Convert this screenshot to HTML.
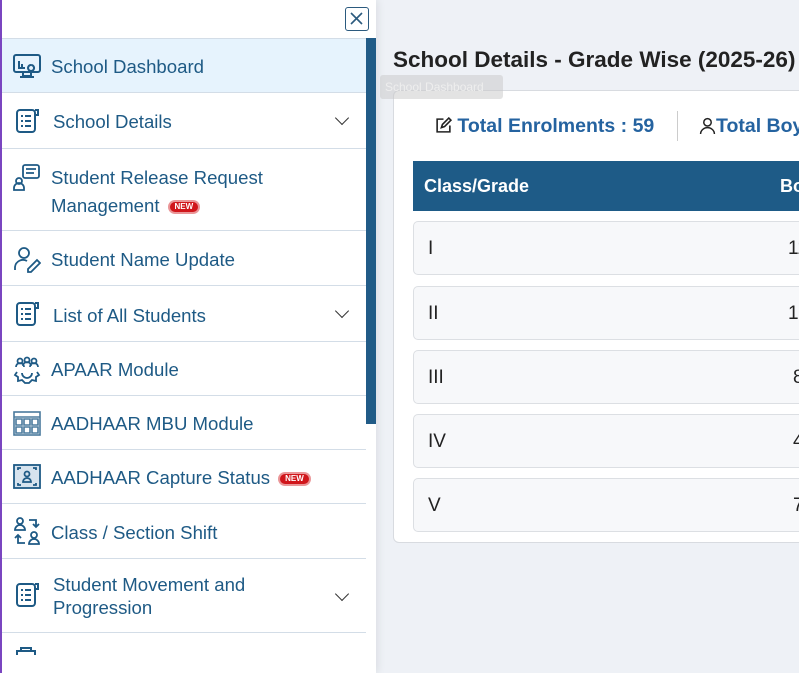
<!DOCTYPE html>
<html><head><meta charset="utf-8"><style>
*{margin:0;padding:0;box-sizing:border-box}
body{width:799px;height:673px;overflow:hidden;background:#eef1f6;font-family:"Liberation Sans",sans-serif;position:relative}
.side{position:absolute;left:0;top:0;width:376px;height:673px;background:#fff;border-left:2px solid #7a45c0;box-shadow:2px 0 8px rgba(0,0,0,.08)}
.close{position:absolute;left:343px;top:7px;width:24px;height:24px;border:1.5px solid #2b5a7e;border-radius:3px}
.thumb{position:absolute;left:364px;top:38px;width:10px;height:386px;background:#215b87}
.row{position:absolute;left:0;width:364px;border-top:1.5px solid #d3dde7;color:#1e5a85;font-size:18.6px}
.row svg{position:absolute;left:11px}
.row .t{position:absolute;left:49px;line-height:28px;white-space:nowrap}
.chev{position:absolute;left:335px;width:10px;height:10px;border-right:1.5px solid #333;border-bottom:1.5px solid #333;transform:rotate(45deg)}
.new{display:inline-block;background:#d0161b;color:#fff;font-size:8px;line-height:9px;height:10px;font-weight:bold;padding:0 5px;border-radius:5px;margin-left:10px;vertical-align:middle;box-shadow:0 0 0 2px rgba(208,22,27,.45)}
.title{position:absolute;left:393px;top:47px;font-size:22.5px;font-weight:bold;color:#222;white-space:nowrap}
.tip{position:absolute;left:380px;top:75px;width:123px;height:24px;background:rgba(200,200,200,.5);color:#eee;font-size:12px;padding:5px;border-radius:3px;z-index:3}
.card{position:absolute;left:393px;top:90px;width:420px;height:453px;background:#fff;border:1px solid #d8dbe0;border-radius:6px}
.stat{position:absolute;top:115px;font-size:19.5px;font-weight:bold;color:#2563a0;white-space:nowrap}
.head{position:absolute;left:413px;top:161px;width:400px;height:50px;background:#1e5b87;color:#fff;font-weight:bold;font-size:18px}
.tr{position:absolute;left:413px;width:400px;height:54px;background:#f7f8fa;border:1px solid #dcdfe3;border-radius:5px;font-size:19px;color:#222}
.tr span{position:absolute;top:16px}
</style></head><body>
<div class="side">
<div class="close"><svg width="21" height="21" viewBox="0 0 21 21"><path d="M5 5L16 16M16 5L5 16" stroke="#2b5a7e" stroke-width="1.6"/></svg></div>
<div class="row" style="top:38px;height:55px;background:#e6f3fd"><svg width="28" height="28" viewBox="0 0 28 28" style="top:13px" fill="none" stroke="#1e5a85" stroke-width="2"><rect x="1" y="3" width="26" height="17" rx="2"/><path d="M6 9v7h6M9 12v4M18 13a3 3 0 1 0 0.1 0M10 20v4h8v-4M7 25h14"/></svg><span class="t" style="top:14px">School Dashboard</span></div>
<div class="row" style="top:92px;height:57px"><svg width="28" height="28" viewBox="0 0 28 28" style="top:14px" fill="none" stroke="#1e5a85" stroke-width="2"><rect x="4" y="3" width="18" height="22" rx="3"/><path d="M22 3h3v5h-3M8 9h2M12 9h6M8 14h2M12 14h6M8 19h2M12 19h6"/></svg><span class="t" style="left:51px;top:15px">School Details</span><i class="chev" style="top:20px"></i></div>
<div class="row" style="top:148px;height:83px"><svg width="28" height="28" viewBox="0 0 28 28" style="top:14px" fill="none" stroke="#1e5a85" stroke-width="1.8"><rect x="10" y="2" width="16" height="13" rx="2"/><path d="M13 6h10M13 10h8"/><circle cx="6" cy="18" r="3"/><path d="M1 27v-2a5 5 0 0 1 10 0v2z"/></svg><span class="t" style="top:15px">Student Release Request<br>Management<span class="new">NEW</span></span></div>
<div class="row" style="top:230px;height:56px"><svg width="28" height="28" viewBox="0 0 28 28" style="top:14px" fill="none" stroke="#1e5a85" stroke-width="1.8"><circle cx="11" cy="8" r="5"/><path d="M2 25v-3a8 8 0 0 1 12-6M15 24l9-9 3 3-9 9h-3z"/></svg><span class="t" style="top:15px">Student Name Update</span></div>
<div class="row" style="top:285px;height:57px"><svg width="28" height="28" viewBox="0 0 28 28" style="top:14px" fill="none" stroke="#1e5a85" stroke-width="2"><rect x="4" y="3" width="18" height="22" rx="3"/><path d="M22 3h3v5h-3M8 9h2M12 9h6M8 14h2M12 14h6M8 19h2M12 19h6"/></svg><span class="t" style="left:51px;top:16px">List of All Students</span><i class="chev" style="top:20px"></i></div>
<div class="row" style="top:341px;height:55px"><svg width="28" height="28" viewBox="0 0 28 28" style="top:14px" fill="none" stroke="#1e5a85" stroke-width="1.8"><circle cx="7" cy="5" r="2.5"/><circle cx="14" cy="4" r="2.5"/><circle cx="21" cy="5" r="2.5"/><path d="M3 11a4 4 0 0 1 8 0M10 10a4 4 0 0 1 8 0M17 11a4 4 0 0 1 8 0M4 16l-2 3 3 2 0 4 4-1 3 3h4l3-3 4 1 0-4 3-2-2-3M9 17a5 5 0 0 0 10 0"/></svg><span class="t" style="top:14px">APAAR Module</span></div>
<div class="row" style="top:395px;height:55px"><svg width="28" height="28" viewBox="0 0 28 28" style="top:13px" fill="none" stroke="#1e5a85" stroke-width="1.6" opacity=".8"><rect x="1" y="3" width="26" height="23"/><path d="M1 8h26M3 10h6v6h-6zM11 10h6v6h-6zM19 10h6v6h-6zM3 18h6v6h-6zM11 18h6v6h-6zM19 18h6v6h-6z"/></svg><span class="t" style="top:14px">AADHAAR MBU Module</span></div>
<div class="row" style="top:449px;height:55px"><svg width="28" height="28" viewBox="0 0 28 28" style="top:12px" fill="none" stroke="#1e5a85" stroke-width="1.8"><rect x="1" y="3" width="26" height="23" fill="#d6e3ee"/><path d="M5 8v-2h3M23 8v-2h-3M5 21v2h3M23 21v2h-3"/><circle cx="14" cy="12" r="2.5"/><path d="M10 20a4 4 0 0 1 8 0z"/></svg><span class="t" style="top:14px">AADHAAR Capture Status<span class="new">NEW</span></span></div>
<div class="row" style="top:503px;height:56px"><svg width="28" height="28" viewBox="0 0 28 28" style="top:13px" fill="none" stroke="#1e5a85" stroke-width="1.8"><circle cx="7" cy="4" r="3"/><path d="M2 13a5 5 0 0 1 10 0zM16 3h7v6M20 7l3 3 3-3"/><circle cx="21" cy="18" r="3"/><path d="M16 27a5 5 0 0 1 10 0zM12 26h-7v-7M2 21l3-3 3 3"/></svg><span class="t" style="top:15px">Class / Section Shift</span></div>
<div class="row" style="top:558px;height:75px"><svg width="28" height="28" viewBox="0 0 28 28" style="top:22px" fill="none" stroke="#1e5a85" stroke-width="2"><rect x="4" y="3" width="18" height="22" rx="3"/><path d="M22 3h3v5h-3M8 9h2M12 9h6M8 14h2M12 14h6M8 19h2M12 19h6"/></svg><span class="t" style="left:51px;top:14px;line-height:23px">Student Movement and<br>Progression</span><i class="chev" style="top:30px"></i></div>
<div class="row" style="top:632px;height:41px"><svg width="28" height="10" viewBox="0 0 28 10" style="top:13px" fill="none" stroke="#1e5a85" stroke-width="2"><path d="M4 9v-4h18v4M8 5v-3h10v3"/></svg></div>
<div class="thumb"></div>
</div>
<div class="title">School Details - Grade Wise (2025-26)</div>
<div class="tip">School Dashboard</div>
<div class="card"></div>
<div class="stat" style="left:435px"><svg width="17" height="17" viewBox="0 0 16 16" fill="none" stroke="#222" stroke-width="1.5" style="vertical-align:-2px"><path d="M8 2H2v12h12V8M6 10l1-3 6-6 2 2-6 6z"/></svg> Total Enrolments : 59</div>
<div style="position:absolute;left:677px;top:111px;width:1px;height:30px;background:#ccc"></div>
<div class="stat" style="left:699px"><svg width="17" height="17" viewBox="0 0 16 16" fill="none" stroke="#222" stroke-width="1.4" style="vertical-align:-2px"><circle cx="8" cy="5" r="3.5"/><path d="M1.5 16a6.5 6 0 0 1 13 0"/></svg>Total Boys</div>
<div class="head"><span style="position:absolute;left:11px;top:15px">Class/Grade</span><span style="position:absolute;left:367px;top:15px">Boys</span></div>
<div class="tr" style="top:221px"><span style="left:14px">I</span><span style="left:374px">11</span></div>
<div class="tr" style="top:286px"><span style="left:14px">II</span><span style="left:374px">10</span></div>
<div class="tr" style="top:350px"><span style="left:14px">III</span><span style="left:379px">8</span></div>
<div class="tr" style="top:414px"><span style="left:14px">IV</span><span style="left:379px">4</span></div>
<div class="tr" style="top:478px"><span style="left:14px">V</span><span style="left:379px">7</span></div>
</body></html>
